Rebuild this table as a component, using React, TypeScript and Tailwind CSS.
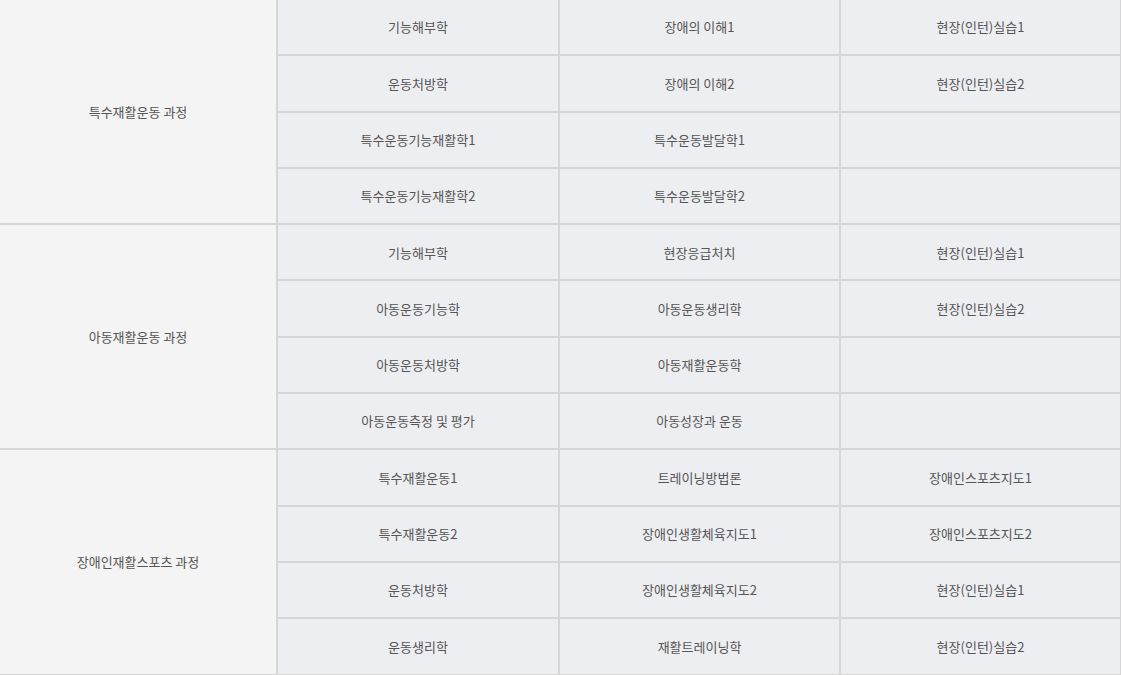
import React from "react";

const groups = [
  {
    name: "특수재활운동 과정",
    rows: [
      ["기능해부학", "장애의 이해1", "현장(인턴)실습1"],
      ["운동처방학", "장애의 이해2", "현장(인턴)실습2"],
      ["특수운동기능재활학1", "특수운동발달학1", ""],
      ["특수운동기능재활학2", "특수운동발달학2", ""],
    ],
  },
  {
    name: "아동재활운동 과정",
    rows: [
      ["기능해부학", "현장응급처치", "현장(인턴)실습1"],
      ["아동운동기능학", "아동운동생리학", "현장(인턴)실습2"],
      ["아동운동처방학", "아동재활운동학", ""],
      ["아동운동측정 및 평가", "아동성장과 운동", ""],
    ],
  },
  {
    name: "장애인재활스포츠 과정",
    rows: [
      ["특수재활운동1", "트레이닝방법론", "장애인스포츠지도1"],
      ["특수재활운동2", "장애인생활체육지도1", "장애인스포츠지도2"],
      ["운동처방학", "장애인생활체육지도2", "현장(인턴)실습1"],
      ["운동생리학", "재활트레이닝학", "현장(인턴)실습2"],
    ],
  },
];

export default function App() {
  return (
    <div
      className="w-[1121px] h-[675px] bg-white overflow-hidden text-[13px] text-[#555555]"
      style={{ fontFamily: '"Noto Sans CJK KR", "Noto Sans", sans-serif' }}
    >
      <div className="bg-[#d6d6d6] pr-[1px] pb-[2px] w-[1121px]">
        <div className="grid grid-cols-[276px_280px_279px_279px] grid-rows-[repeat(12,54.3px)] gap-[2px]">
          {groups.map((g) => (
            <React.Fragment key={g.name}>
              <div className="row-span-4 bg-[#f4f4f4] flex items-center justify-center">
                {g.name}
              </div>
              {g.rows.map((r, i) => (
                <React.Fragment key={i}>
                  {r.map((c, j) => (
                    <div
                      key={j}
                      className="bg-[#edeef1] flex items-center justify-center"
                    >
                      {c}
                    </div>
                  ))}
                </React.Fragment>
              ))}
            </React.Fragment>
          ))}
        </div>
      </div>
    </div>
  );
}
